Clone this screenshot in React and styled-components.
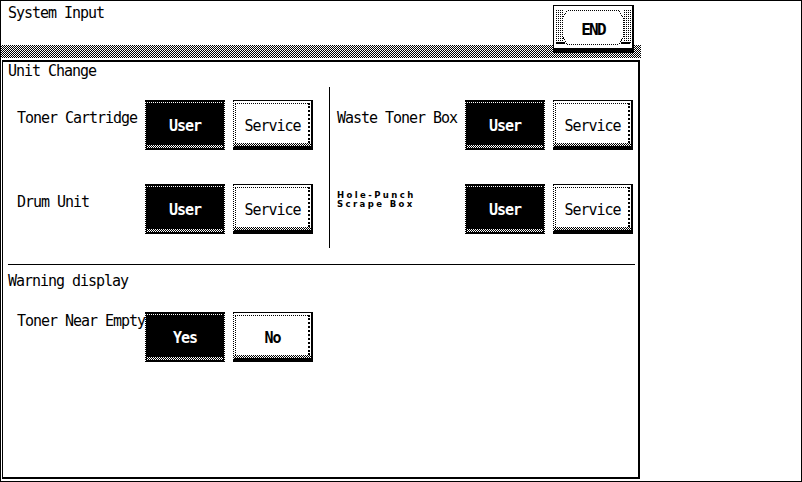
import React from 'react';
import styled, { createGlobalStyle, css } from 'styled-components';

const GlobalStyle = createGlobalStyle`
  html, body {
    margin: 0;
    padding: 0;
    background: #fff;
  }
`;

// 1px black/white checker used for the dithered bands
const checker = 'repeating-conic-gradient(#000 0 25%, #fff 0 50%) 0 0 / 2px 2px';

const Screen = styled.div`
  box-sizing: border-box;
  width: 802px;
  height: 482px;
  border: 1px solid #000;
  display: flex;
  align-items: flex-start;
  background: #fff;
  color: #000;
  font-family: 'DejaVu Sans Mono', 'Liberation Mono', monospace;
  font-size: 15px;
  letter-spacing: -1.03px;
`;

const Main = styled.div`
  width: 640px;
  display: flex;
  flex-direction: column;
`;

const Header = styled.div`
  height: 57px;
  display: flex;
  align-items: flex-start;
  justify-content: space-between;
  background: linear-gradient(#fff, #fff) 0 0 / 100% 44px no-repeat, ${checker};
`;

const Title = styled.h1`
  margin: 0;
  padding: 4px 0 0 7px;
  font-size: 15px;
  font-weight: normal;
  line-height: 16px;
`;

const EndKey = styled.button`
  position: relative;
  box-sizing: border-box;
  width: 81px;
  height: 48px;
  margin: 4px 7px 0 0;
  padding: 4px 0 0;
  border-style: solid;
  border-color: #000;
  border-width: 1px 2px 5px 1px;
  background: #fff;
  color: #000;
  font-family: inherit;
  font-size: 16px;
  font-weight: bold;
  letter-spacing: -1.8px;
  display: flex;
  align-items: center;
  justify-content: center;
  cursor: pointer;
`;

const Bevel = styled.svg`
  position: absolute;
  top: 0;
  left: 0;
`;

const Caption = styled.span`
  position: relative;
`;

const Panel = styled.div`
  box-sizing: border-box;
  width: 638px;
  height: 419px;
  margin: 2px 0 0 1px;
  border-style: solid;
  border-color: #000;
  border-width: 2px 2px 2px 1px;
`;

const SectionTitle = styled.h2`
  margin: 0;
  padding: ${(p) => p.$top}px 0 0 5px;
  font-size: 15px;
  font-weight: normal;
  line-height: 16px;
`;

const UnitBody = styled.div`
  display: flex;
  margin-top: 8px;
`;

const Column = styled.div`
  box-sizing: border-box;
  width: ${(p) => (p.$width ? `${p.$width}px` : 'auto')};
  padding: 13px 0 14px ${(p) => p.$left}px;
  display: flex;
  flex-direction: column;
  gap: 34px;
`;

const Divider = styled.div`
  width: 1px;
  background: #000;
`;

const Rule = styled.hr`
  margin: 16px 3px 0 5px;
  height: 1px;
  border: none;
  background: #000;
`;

const Row = styled.div`
  display: flex;
  align-items: flex-start;
  padding-left: ${(p) => p.$left || 0}px;
  margin-top: ${(p) => p.$top || 0}px;
`;

const Label = styled.div`
  flex: none;
  width: 128px;
  padding-top: ${(p) => p.$pad}px;
  line-height: 16px;
  white-space: nowrap;
`;

const SmallLabel = styled(Label)`
  font-family: 'DejaVu Sans', 'Liberation Sans', sans-serif;
  font-size: 8.5px;
  font-weight: bold;
  letter-spacing: 2.4px;
  line-height: 9px;
`;

const Keys = styled.div`
  display: flex;
  gap: 8px;
`;

const onKey = css`
  padding-top: 2px;
  background: #000;
  background-clip: padding-box;
  color: #fff;
  font-weight: bold;
  border: none;
  border-left: 1px dotted #000;
  border-right: 1px dotted #000;

  &::before {
    content: '';
    position: absolute;
    top: 2px;
    left: 1px;
    right: 1px;
    height: 1px;
    background: repeating-linear-gradient(90deg, #fff 0 1px, transparent 1px 2px);
  }

  &::after {
    content: '';
    position: absolute;
    bottom: 2px;
    left: 1px;
    right: 1px;
    height: 3px;
    background: ${checker};
  }
`;

const offKey = css`
  padding-top: 4px;
  background: #fff;
  color: #000;
  font-weight: ${(p) => (p.$strong ? 'bold' : 'normal')};
  border-style: solid solid solid dotted;
  border-color: #000;
  border-width: 1px 2px 4px 1px;

  &::before {
    content: '';
    position: absolute;
    top: 2px;
    left: 1px;
    right: 1px;
    bottom: 3px;
    border-top: 1px dotted #000;
    border-left: 1px dotted #000;
    border-right: 2px dotted #000;
  }

  &::after {
    content: '';
    position: absolute;
    bottom: 0;
    left: 0;
    right: 0;
    height: 3px;
    background: ${checker};
  }
`;

const Key = styled.button`
  position: relative;
  box-sizing: border-box;
  width: 80px;
  height: 50px;
  margin: 0;
  padding: 0;
  font-family: inherit;
  font-size: 15px;
  letter-spacing: inherit;
  display: flex;
  align-items: center;
  justify-content: center;
  cursor: pointer;
  ${(p) => (p.$on ? onKey : offKey)}
`;

const EndBevel = () => (
  <Bevel width="78" height="42" viewBox="0 0 78 42" shapeRendering="crispEdges">
    <defs>
      <pattern id="endDots" width="2" height="2" patternUnits="userSpaceOnUse">
        <rect width="1" height="1" fill="#000" />
      </pattern>
    </defs>
    <rect x="1" y="3" width="8" height="34" fill="url(#endDots)" />
    <rect x="69" y="3" width="8" height="34" fill="url(#endDots)" />
    <path
      d="M13.5 4.5 H64.5 L69.5 12.5 V30.5 L64.5 38.5 H13.5 L8.5 30.5 V12.5 Z"
      fill="#fff"
      stroke="#000"
      strokeDasharray="1 1"
    />
    <rect x="2" y="36" width="9" height="2" fill="#000" />
    <rect x="67" y="36" width="9" height="2" fill="#000" />
  </Bevel>
);

const Choice = ({ on, off, strong }) => (
  <Keys>
    <Key type="button" $on>
      <Caption>{on}</Caption>
    </Key>
    <Key type="button" $strong={strong}>
      <Caption>{off}</Caption>
    </Key>
  </Keys>
);

const App = () => (
  <>
    <GlobalStyle />
    <Screen>
      <Main>
        <Header>
          <Title>System Input</Title>
          <EndKey type="button">
            <EndBevel />
            <Caption>END</Caption>
          </EndKey>
        </Header>
        <Panel>
          <SectionTitle $top={1}>Unit Change</SectionTitle>
          <UnitBody>
            <Column $width={326} $left={14}>
              <Row>
                <Label $pad={10}>Toner Cartridge</Label>
                <Choice on="User" off="Service" />
              </Row>
              <Row>
                <Label $pad={10}>Drum Unit</Label>
                <Choice on="User" off="Service" />
              </Row>
            </Column>
            <Divider />
            <Column $left={7}>
              <Row>
                <Label $pad={10}>Waste Toner Box</Label>
                <Choice on="User" off="Service" />
              </Row>
              <Row>
                <SmallLabel $pad={7}>
                  Hole-Punch
                  <br />
                  Scrape Box
                </SmallLabel>
                <Choice on="User" off="Service" />
              </Row>
            </Column>
          </UnitBody>
          <Rule />
          <SectionTitle $top={8}>Warning display</SectionTitle>
          <Row $left={14} $top={23}>
            <Label $pad={1}>Toner Near Empty</Label>
            <Choice on="Yes" off="No" strong />
          </Row>
        </Panel>
      </Main>
    </Screen>
  </>
);

export default App;
